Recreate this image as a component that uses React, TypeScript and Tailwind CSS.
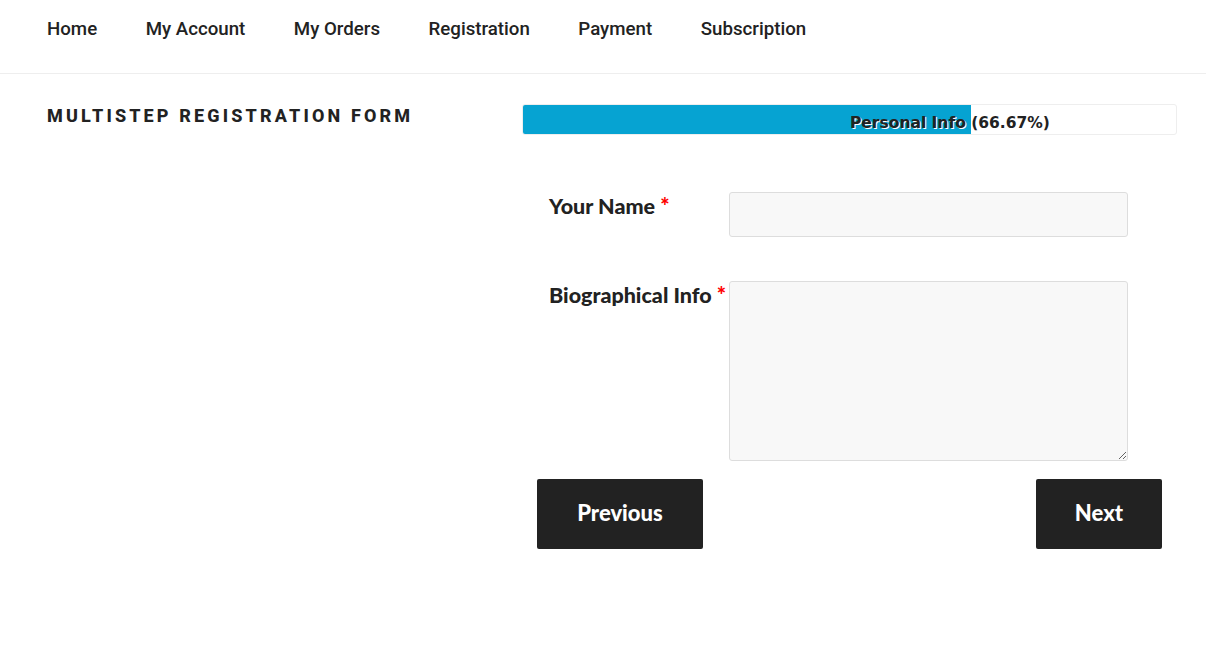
import { useState } from "react";

const navItems = ["Home", "My Account", "My Orders", "Registration", "Payment", "Subscription"];

export default function App() {
  const [name, setName] = useState("");
  const [bio, setBio] = useState("");
  const progress = 448; // px of 653 bar

  return (
    <div className="min-h-[668px] bg-white text-[#222]">
      <nav className="h-[74px] border-b border-[#eeeeee] bg-white px-[47px] flex items-center gap-[48.5px] font-['Roboto',sans-serif] text-[18.7px] font-medium">
        {navItems.map((item) => (
          <a key={item} className="text-[#222] -mt-[15px]" href="#">
            {item}
          </a>
        ))}
      </nav>

      <div className="flex pl-[47px] pt-[30px]">
        <div className="w-[475px]">
          <h2 className="-mt-[2px] font-['Roboto',sans-serif] text-[18px] font-extrabold uppercase tracking-[0.175em] text-[#222]">
            Multistep Registration Form
          </h2>
        </div>

        <div className="w-[655px]">
          <div className="relative h-[31px] rounded-[3px] border border-[#eeeeee] bg-white overflow-hidden">
            <div className="h-full bg-[#06a3d2]" style={{ width: progress }} />
            <span className="absolute left-[327px] top-[7px] font-['DejaVu_Sans',sans-serif] text-[15.5px] font-bold text-[#222] [text-shadow:1px_1px_0_#fff]">
              Personal Info (66.67%)
            </span>
          </div>

          <form className="pt-[57px] pl-[15px] pr-[15px] font-['Lato',sans-serif]">
            <div className="flex pl-[12px]">
              <label className="w-[180px] -mt-[3px] text-[21.5px] font-black text-[#222]">
                Your Name <span className="text-[#ff0000] text-[22px]">*</span>
              </label>
              <input
                value={name}
                onChange={(e) => setName(e.target.value)}
                className="w-[399px] h-[45px] rounded-[3px] border border-[#dddddd] bg-[#f8f8f8] px-3 outline-none"
              />
            </div>

            <div className="flex pl-[12px] mt-[44px]">
              <label className="w-[180px] -mt-[3px] text-[21.5px] font-black text-[#222] whitespace-nowrap">
                Biographical Info <span className="text-[#ff0000] text-[22px]">*</span>
              </label>
              <textarea
                value={bio}
                onChange={(e) => setBio(e.target.value)}
                className="w-[399px] h-[180px] rounded-[3px] border border-[#dddddd] bg-[#f8f8f8] px-3 py-2 outline-none"
              />
            </div>

            <div className="flex justify-between mt-[18px]">
              <button type="button" className="w-[166px] h-[70px] pb-[4px] rounded-[2px] bg-[#222] text-white text-[22px] font-black">
                Previous
              </button>
              <button type="button" className="w-[126px] h-[70px] pb-[4px] rounded-[2px] bg-[#222] text-white text-[22px] font-black">
                Next
              </button>
            </div>
          </form>
        </div>
      </div>
    </div>
  );
}
